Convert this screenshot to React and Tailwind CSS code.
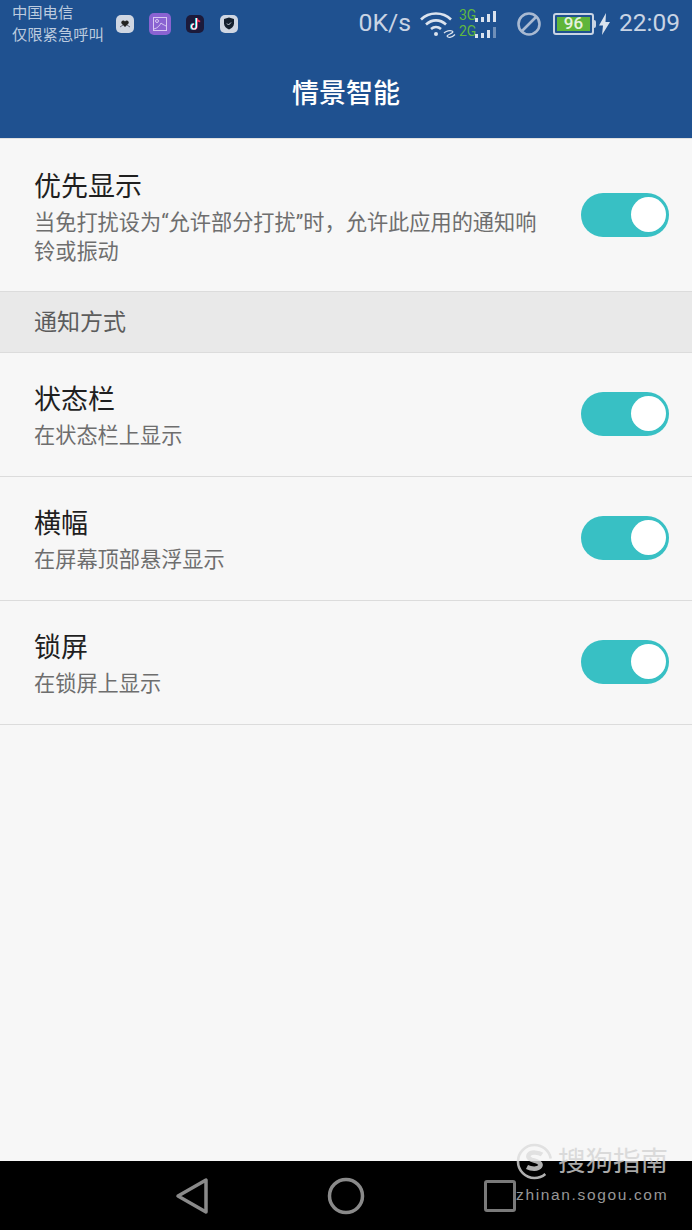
const Toggle = () => (
  <div className="flex h-[44px] w-[88px] shrink-0 items-center justify-end rounded-full bg-[#38c0c4] pr-[3px]">
    <div className="h-[35px] w-[35px] rounded-full bg-white" />
  </div>
);

const Row = ({ title, sub }) => (
  <div className="flex h-[124px] items-center justify-between border-b border-[#dcdcdc] pb-[2px] pl-[34px] pr-[23px]">
    <div className="mt-[6px]">
      <div className="text-[27px] leading-[34px] text-[#1f1f1f]">{title}</div>
      <div className="mt-[4px] text-[21.200px] leading-[30px] text-[#6e6e6e]">{sub}</div>
    </div>
    <Toggle />
  </div>
);

const AppIcons = () => (
  <div className="ml-[12px] flex items-center">
    <div className="flex h-[18px] w-[18px] items-center justify-center rounded-[5px] bg-[#cfd6e2]">
      <svg width="12" height="12" viewBox="0 0 12 12">
        <path d="M6 9 2.500 5.500a2 2 0 0 1 3.500-2 2 2 0 0 1 3.500 2z" fill="#222" />
        <path d="M1 9l3-2M11 9 8 7" stroke="#667" strokeWidth="1" />
      </svg>
    </div>
    <div className="ml-[15px] flex h-[22px] w-[22px] items-center justify-center rounded-[5px] bg-[#8a63d2]">
      <svg width="16" height="16" viewBox="0 0 16 16" fill="none" stroke="#d8c8f2" strokeWidth="1">
        <rect x="1.500" y="1.500" width="13" height="13" />
        <path d="M2 13C6 12 8 9 9 7c1 1 3 2 5 3" />
        <circle cx="5" cy="5" r="1.500" />
      </svg>
    </div>
    <div className="ml-[15px] flex h-[18px] w-[18px] items-center justify-center rounded-[5px] bg-[#1c1a3a]">
      <svg width="12" height="14" viewBox="0 0 12 14" fill="none">
        <path d="M7 1v8.500a2.500 2.500 0 1 1-2.500-2.500" stroke="#25d4dc" strokeWidth="2" />
        <path d="M8 1v8.500a2.500 2.500 0 1 1-2.500-2.500M8 1.500c.4 1.800 1.600 2.800 3.200 3" stroke="#f0305c" strokeWidth="1.400" />
        <path d="M7.500 1v8.500a2.500 2.500 0 1 1-2.500-2.500" stroke="#fff" strokeWidth="1.200" />
      </svg>
    </div>
    <div className="ml-[16px] flex h-[18px] w-[18px] items-center justify-center rounded-[5px] bg-[#cfd6e2]">
      <svg width="12" height="13" viewBox="0 0 12 13">
        <path d="M6 .5 11 2v4.500c0 3-2.500 5-5 6-2.500-1-5-3-5-6V2z" fill="#15202e" />
        <path d="M4 6.500l1.500 1.500L8 5.500" stroke="#cfd6e2" strokeWidth="1" fill="none" />
      </svg>
    </div>
  </div>
);

const Signal = ({ label, dim }) => (
  <div className="flex h-[16px] items-center">
    <span className="w-[16px] text-[14px] leading-[15px] text-[#5fb840]">{label}</span>
    <div className="flex h-[12px] items-end gap-[3px]">
      <div className="h-[4px] w-[3px] bg-[#dbe3ee]" />
      <div className="h-[5px] w-[3px] bg-[#dbe3ee]" />
      <div className="h-[8px] w-[3px] bg-[#dbe3ee]" />
      <div className={`h-[11px] w-[3px] ${dim ? "bg-[#6f8fb8]" : "bg-[#dbe3ee]"}`} />
    </div>
  </div>
);

const StatusRight = () => (
  <div className="mr-[12px] flex items-center text-[#c9d4e4]">
    <span className="text-[24.800px] leading-none">0K/s</span>
    <svg className="ml-[9px]" width="36" height="28" viewBox="0 0 36 28" fill="none" stroke="#dbe3ee" strokeWidth="2.600">
      <path d="M1 9.500C9 1.500 23 1.500 31 9.500" />
      <path d="M6 14.500c6-5.500 14-5.500 20 0" />
      <path d="M11 19c3-2.500 7-2.500 10 0" />
      <circle cx="16" cy="24" r="2" fill="#dbe3ee" stroke="none" />
      <path d="M24 23c2-2 6-3 8-2s0 2-2 3-4 2-2 3 5-.5 7-2.500" strokeWidth="1.200" />
    </svg>
    <div className="ml-[3px] flex flex-col">
      <Signal label="3G" />
      <Signal label="2G" dim />
    </div>
    <svg className="ml-[20px]" width="26" height="26" viewBox="0 0 26 26" fill="none" stroke="#a9bad2" strokeWidth="2.600">
      <circle cx="13" cy="13" r="10.500" />
      <path d="M5.500 20.500 20.500 5.500" />
    </svg>
    <div className="ml-[11px] flex h-[22px] w-[41px] items-center rounded-[3px] border-2 border-[#c9d4e4] p-[2px]">
      <div className="flex h-full w-full items-center justify-center bg-[#5fb53a] text-[17px] font-medium leading-none text-[#e6f2e0]">96</div>
    </div>
    <div className="h-[8px] w-[2px] rounded-r-sm bg-[#c9d4e4]" />
    <svg className="ml-[3px]" width="11" height="22" viewBox="0 0 11 22">
      <path d="M7 0 0 12.500h4L3 22l8-13H6.500z" fill="#dbe3ee" />
    </svg>
    <span className="ml-[9px] text-[24.500px] leading-none">22:09</span>
  </div>
);

export default function App() {
  return (
    <div className="relative flex h-[1230px] w-[692px] flex-col overflow-hidden bg-[#f7f7f7] font-['Roboto','Noto_Sans_CJK_SC',sans-serif]">
      <div className="h-[139px] shrink-0 border-b border-[#e0e0e0] bg-[#1f5190]">
        <div className="flex h-[47px] items-center justify-between">
          <div className="flex items-center">
            <div className="ml-[12px] text-[15.300px] leading-[22px] text-[#bccbdf]">
              <div>中国电信</div>
              <div>仅限紧急呼叫</div>
            </div>
            <AppIcons />
          </div>
          <StatusRight />
        </div>
        <div className="mt-[27px] text-center text-[27px] font-medium leading-[40px] text-white">情景智能</div>
      </div>

      <div className="flex h-[153px] shrink-0 items-center justify-between border-b border-[#dcdcdc] pl-[34px] pr-[23px]">
        <div className="mt-[5px]">
          <div className="text-[27px] leading-[34px] text-[#1f1f1f]">优先显示</div>
          <div className="mt-[4px] w-[510px] text-[21.200px] leading-[29px] text-[#6e6e6e]">当免打扰设为“允许部分打扰”时，允许此应用的通知响铃或振动</div>
        </div>
        <div className="-mt-[1px]"><Toggle /></div>
      </div>

      <div className="flex h-[61px] shrink-0 items-center border-b border-[#dcdcdc] bg-[#e9e9e9] pl-[34px] pt-[3px] text-[23px] text-[#5c5c5c]">通知方式</div>

      <Row title="状态栏" sub="在状态栏上显示" />
      <Row title="横幅" sub="在屏幕顶部悬浮显示" />
      <Row title="锁屏" sub="在锁屏上显示" />

      <div className="flex-1" />

      <div className="relative flex h-[69px] shrink-0 items-center bg-black">
        <svg className="ml-[175px]" width="36" height="38" viewBox="0 0 36 38" fill="none" stroke="#8a8a8a" strokeWidth="3.500" strokeLinejoin="round">
          <path d="M31 3v32L3 19z" />
        </svg>
        <svg className="ml-[116px]" width="38" height="38" viewBox="0 0 38 38" fill="none" stroke="#8a8a8a" strokeWidth="3.500">
          <circle cx="19" cy="19" r="16.500" />
        </svg>
        <div className="ml-[119px] h-[32px] w-[32px] rounded-[3px] border-[3.500px] border-[#7a7a7a]" />
      </div>

      {/* 水印 */}
      <div className="absolute left-[516px] top-[1143px] flex flex-col opacity-80">
        <div className="flex items-center whitespace-nowrap">
          <svg width="38" height="38" viewBox="0 0 38 38" fill="none">
            <circle cx="18.500" cy="18.500" r="16.500" stroke="#dcdcdc" strokeWidth="2.600" strokeDasharray="86 18" strokeDashoffset="-14" />
            <path d="M26 11.500c-3-2-11-3-13 0s1 5 5 6 8 3 6 6-9 2.500-13 .5" stroke="#dcdcdc" strokeWidth="4.500" />
          </svg>
          <span className="ml-[4px] text-[27.500px] leading-[38px] text-[#d4d4d4]">搜狗指南</span>
        </div>
        <div className="mt-[5px] whitespace-nowrap font-['Liberation_Sans',sans-serif] text-[15.500px] leading-[18px] tracking-[1.650px] text-[#bdbdbd]">zhinan.sogou.com</div>
      </div>
    </div>
  );
}
